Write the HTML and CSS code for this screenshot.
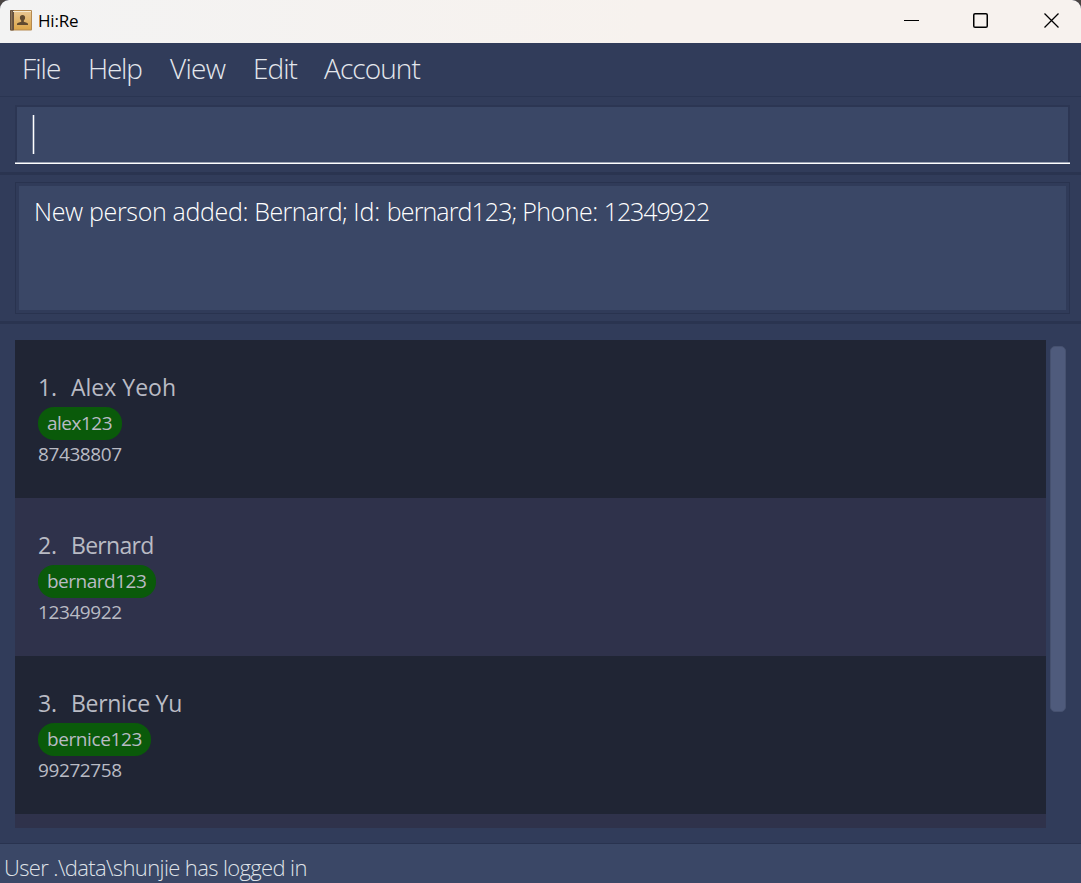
FILE: index.html
```html
<!DOCTYPE html>
<html lang="en">
<head>
<meta charset="utf-8">
<title>Hi:Re</title>
<link rel="stylesheet" href="styles.css">
</head>
<body>
<div class="window">
  <header class="titlebar">
    <svg class="app-icon" width="22" height="21" viewBox="0 0 22 21">
      <defs><linearGradient id="cover" x1="0" y1="0" x2="0" y2="1"><stop offset="0" stop-color="#e8c590"/><stop offset="1" stop-color="#dda648"/></linearGradient></defs>
      <rect x="0" y="0" width="22" height="20.5" rx="1" fill="#b68a50"/>
      <rect x="0" y="0" width="4" height="20.5" rx="1" fill="#65503f"/>
      <rect x="1" y="1" width="1.2" height="18.5" fill="#8b7358"/>
      <rect x="4" y="2" width="17" height="17.5" fill="url(#cover)"/>
      <rect x="3" y="1" width="18" height="1" fill="#f7ead2"/>
      <path d="M12.5 5c1.7 0 2.6 1.1 2.6 2.7 0 1.300-.6 2.100-1.300 2.800v1.300l3.600 1.200q.7.4.7 2H6.900q0-1.600.7-2l3.600-1.200v-1.300c-.7-.7-1.300-1.500-1.300-2.800C9.900 6.100 10.800 5 12.500 5z" fill="#60492f"/>
    </svg>
    <span class="app-name">Hi:Re</span>
    <div class="controls">
      <svg width="16" height="16" viewBox="0 0 16 16"><path d="M0 7.500H15" stroke="#000"/></svg>
      <svg width="16" height="16" viewBox="0 0 16 16"><rect x=".75" y=".75" width="13.500" height="13.500" rx="1.300" fill="none" stroke="#000" stroke-width="1.500"/></svg>
      <svg width="16" height="16" viewBox="0 0 16 16"><path d="M.5.500l14 14M14.500.500l-14 14" stroke="#000" stroke-width="1.300"/></svg>
    </div>
  </header>
  <nav class="menubar"><span class="m-file">File</span><span class="m-help">Help</span><span class="m-view">View</span><span class="m-edit">Edit</span><span class="m-account">Account</span></nav>
  <section class="command"><div class="command-field"><i class="caret"></i></div></section>
  <section class="result"><div class="result-box"><span class="result-text"><span class="r-label">New person added: </span><span class="r-name">Bernard; </span><span class="r-key">Id: </span><span class="r-id">bernard123; </span>Phone: <span class="r-phone">12349922</span></span></div></section>
  <main class="people">
    <div class="list">
      <article class="card"><h2><span class="num">1.</span><span class="n-alex">Alex Yeoh</span></h2><span class="tag tag-alex">alex123</span><p>87438807</p></article>
      <article class="card alt"><h2><span class="num">2.</span><span class="n-bernard">Bernard</span></h2><span class="tag tag-bernard">bernard123</span><p>12349922</p></article>
      <article class="card"><h2><span class="num">3.</span><span class="n-bernice">Bernice Yu</span></h2><span class="tag tag-bernice">bernice123</span><p>99272758</p></article>
      <article class="card alt"></article>
    </div>
    <div class="track"><div class="thumb"></div></div>
  </main>
  <footer class="status"><span>User .\data\shunjie has logged in</span></footer>
</div>
</body>
</html>
```
FILE: styles.css
```css
* { box-sizing: border-box; }
body { margin: 0; background: #4a4442; font-family: "Open Sans", "Noto Sans", sans-serif; }
.window { width: 1081px; height: 883px; display: flex; flex-direction: column; background: #313c5a; border-radius: 9px 9px 0 0; overflow: hidden; white-space: nowrap; }
.titlebar { height: 43px; flex: none; display: flex; align-items: center; padding: 0 21px 2px 10px; background: linear-gradient(90deg, #f3f3f3, #f7f2ee 60%); }
.app-name { margin-left: 6px; font-size: 17px; letter-spacing: -0.2px; color: #000; }
.controls { margin-left: auto; display: flex; gap: 54px; }
.controls svg { display: block; }
.controls svg:nth-child(2) { margin-left: -1px; }
.controls svg:nth-child(3) { margin-left: 1px; }
.menubar { height: 54px; flex: none; display: flex; border-bottom: 1px solid #2a3552; padding-left: 22px; font-size: 28px; line-height: 51px; font-weight: 300; color: #e4e7ed; letter-spacing: -0.9px; }
.m-file { width: 66px; }
.m-help { width: 82px; letter-spacing: -1.2px; }
.m-view { width: 83px; letter-spacing: -0.7px; }
.m-edit { width: 71px; letter-spacing: -1px; }
.command { height: 78px; flex: none; padding: 8px 11px 0 15px; border-bottom: 3px solid #2a3450; }
.command-field { height: 59px; box-shadow: inset 0 -1px #fff, inset 0 -2px #9ca3b3, inset 0 0 0 2px #2c3653; background: #3a4766; padding: 10px 0 0 18px; }
.caret { display: block; width: 1px; height: 39px; background: #fff; box-shadow: 1px 0 #6f7a92, -1px 0 #6f7a92; }
.result { height: 149px; flex: none; padding: 7px 11px 0 15px; border-bottom: 3px solid #2a3450; }
.result-box { height: 132px; border: 1px solid #29334f; box-shadow: inset 0 0 0 3px #303b59; background: #3a4766; padding: 10px 18px; }
.result-text { font-size: 25px; line-height: 36px; font-weight: 300; letter-spacing: -0.5px; color: #fff; }
.r-label { letter-spacing: -0.33px; }
.r-name { letter-spacing: -0.6px; }
.r-key { letter-spacing: 0; }
.r-id { letter-spacing: -0.9px; }
.r-phone { letter-spacing: -1.1px; }
.people { height: 520px; flex: none; display: flex; padding: 16px 15px 15px 15px; border-bottom: 1px solid #29334f; }
.list { width: 1031px; overflow: hidden; background: #2f324b; }
.card { height: 158px; padding: 30px 23px; background: #202534; color: #b9bbc4; }
.alt { background: #2f324b; }
.card h2 { display: flex; margin: 0; height: 37px; line-height: 34px; font-size: 23px; font-weight: 400; letter-spacing: -0.2px; }
.num { width: 33px; }
.n-alex { letter-spacing: 0; }
.n-bernard { letter-spacing: -0.7px; }
.n-bernice { letter-spacing: -0.3px; }
.tag { display: block; height: 33px; padding-left: 9px; border-radius: 16px; line-height: 32px; background: #0a5a0a; font-size: 19px; letter-spacing: -0.5px; }
.tag-alex { width: 84px; }
.tag-bernard { width: 118px; }
.tag-bernice { width: 113px; letter-spacing: -0.4px; }
.card p { margin: 0; line-height: 28px; font-size: 19px; letter-spacing: -0.4px; }
.track { width: 20px; padding: 6px 0 0 4px; }
.thumb { width: 16px; height: 366px; border-radius: 5px; background: #4f5b7c; border: 1px solid #46516f; }
.status { flex: 1; background: #3a4766; padding-left: 4px; color: #dfe2e8; font-size: 22px; line-height: 46px; font-weight: 300; letter-spacing: -0.63px; }
```
